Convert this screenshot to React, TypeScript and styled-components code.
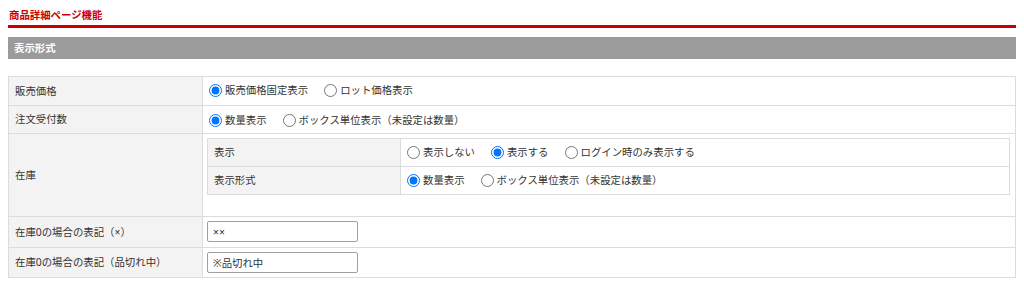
import React from "react";
import styled, { createGlobalStyle } from "styled-components";

const FONT = `"Noto Sans", "Noto Sans CJK JP", sans-serif`;

const GlobalStyle = createGlobalStyle`
  body {
    margin: 8px;
    background: #fff;
    font-family: ${FONT};
    font-size: 10.4px;
    color: #333;
  }
`;

const PageTitle = styled.h2`
  margin: 0;
  padding: 0 0 3px 1px;
  font-size: 10.4px;
  line-height: 14px;
  font-weight: bold;
  color: #cc0000;
  border-bottom: 3px solid #cc0000;
`;

const SectionBar = styled.h3`
  margin: 9px 0 17px;
  height: 22px;
  padding: 0 6px;
  background: #9b9b9b;
  color: #fff;
  font-size: 10.4px;
  font-weight: bold;
  line-height: 22px;
`;

const Table = styled.table`
  width: 100%;
  border-collapse: collapse;
  border: 1px solid #dcdcdc;
`;

const Row = styled.tr``;

const LabelCell = styled.th<{ $width: number }>`
  width: ${(p) => p.$width}px;
  box-sizing: border-box;
  background: #f3f3f3;
  border: 1px solid #dcdcdc;
  font-weight: normal;
  text-align: left;
  padding: 5px 6px;
  line-height: 17px;
  vertical-align: middle;
`;

const ValueCell = styled.td<{ $pad?: string }>`
  border: 1px solid #dcdcdc;
  padding: ${(p) => p.$pad || "5px 6px"};
  line-height: 17px;
  vertical-align: middle;
`;

const NestedTable = styled(Table)`
  margin: 0 0 17px;
  border-color: #d0d0d0;
`;

const Options = styled.div`
  display: flex;
  align-items: center;
  gap: 16px;
`;

const Option = styled.label`
  display: inline-flex;
  align-items: center;
  white-space: nowrap;
`;

const Radio = styled.input.attrs({ type: "radio" })`
  width: 13px;
  height: 13px;
  margin: 0 3px 0 0;
`;

const TextBox = styled.input`
  box-sizing: border-box;
  width: 151px;
  height: 21px;
  margin: 0 0 0 -1px;
  padding: 0 5px;
  border: 1px solid #a0a0a0;
  border-radius: 2px;
  font-family: ${FONT};
  font-size: 10.4px;
  color: #333;
  display: block;
`;

type Opt = { label: string; checked?: boolean };

function RadioGroup({ name, options }: { name: string; options: Opt[] }) {
  return (
    <Options>
      {options.map((o) => (
        <Option key={o.label}>
          <Radio name={name} defaultChecked={!!o.checked} />
          {o.label}
        </Option>
      ))}
    </Options>
  );
}

export default function App() {
  return (
    <>
      <GlobalStyle />
      <PageTitle>商品詳細ページ機能</PageTitle>
      <SectionBar>表示形式</SectionBar>
      <Table>
        <tbody>
          <Row>
            <LabelCell $width={194}>販売価格</LabelCell>
            <ValueCell $pad="5px 6px 6px">
              <RadioGroup
                name="price"
                options={[
                  { label: "販売価格固定表示", checked: true },
                  { label: "ロット価格表示" },
                ]}
              />
            </ValueCell>
          </Row>
          <Row>
            <LabelCell $width={194}>注文受付数</LabelCell>
            <ValueCell $pad="5px 6px 4px">
              <RadioGroup
                name="order"
                options={[
                  { label: "数量表示", checked: true },
                  { label: "ボックス単位表示（未設定は数量）" },
                ]}
              />
            </ValueCell>
          </Row>
          <Row>
            <LabelCell $width={194}>在庫</LabelCell>
            <ValueCell $pad="4px 5px 4px 4px">
              <NestedTable>
                <tbody>
                  <Row>
                    <LabelCell $width={193}>表示</LabelCell>
                    <ValueCell $pad="5px 6px">
                      <RadioGroup
                        name="stock"
                        options={[
                          { label: "表示しない" },
                          { label: "表示する", checked: true },
                          { label: "ログイン時のみ表示する" },
                        ]}
                      />
                    </ValueCell>
                  </Row>
                  <Row>
                    <LabelCell $width={193}>表示形式</LabelCell>
                    <ValueCell $pad="5px 6px">
                      <RadioGroup
                        name="stockfmt"
                        options={[
                          { label: "数量表示", checked: true },
                          { label: "ボックス単位表示（未設定は数量）" },
                        ]}
                      />
                    </ValueCell>
                  </Row>
                </tbody>
              </NestedTable>
            </ValueCell>
          </Row>
          <Row>
            <LabelCell $width={194}>在庫0の場合の表記（×）</LabelCell>
            <ValueCell $pad="4px 5px 5px 5px">
              <TextBox defaultValue="××" />
            </ValueCell>
          </Row>
          <Row>
            <LabelCell $width={194}>在庫0の場合の表記（品切れ中）</LabelCell>
            <ValueCell $pad="4px 5px 4px 5px">
              <TextBox defaultValue="※品切れ中" />
            </ValueCell>
          </Row>
        </tbody>
      </Table>
    </>
  );
}
